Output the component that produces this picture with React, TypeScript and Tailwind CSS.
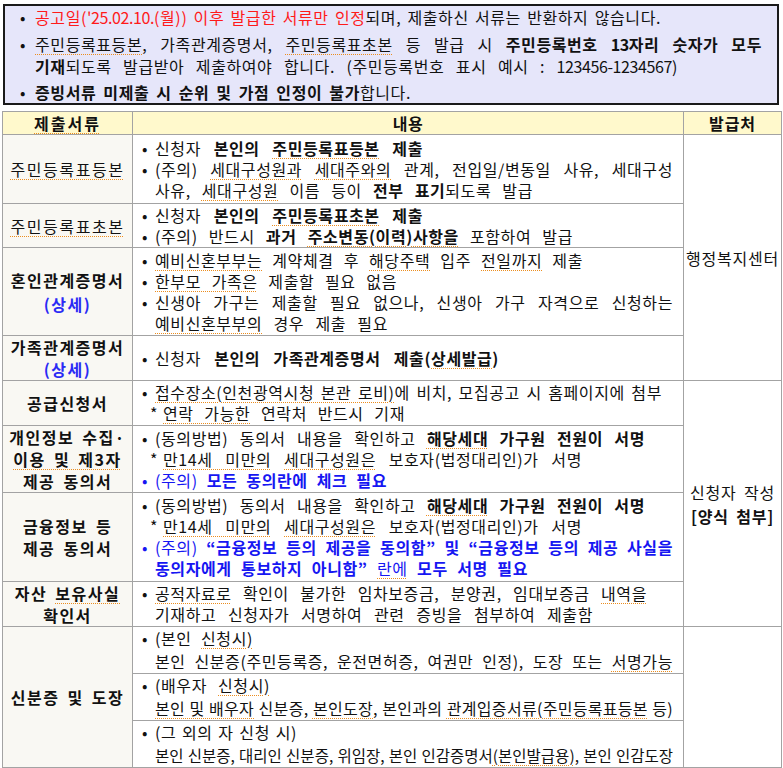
import React from 'react'

type P = { children?: React.ReactNode }

// spell-check style dotted underline seen in the source document
const U = ({ children }: P) => (
  <span className="underline decoration-dotted decoration-[#ec8d1e] decoration-[1px] underline-offset-[3px]">
    {children}
  </span>
)

const B = ({ children }: P) => <b className="font-bold">{children}</b>

// digits are narrower in the source font
const N = ({ children }: P) => <span className="tracking-[-0.4px]">{children}</span>

// one visual line, stretched to the width it has in the document
const Bl = ({ children, w, blue = false }: P & { w: string; blue?: boolean }) => (
  <div className={blue ? 'flex text-[#1616f2]' : 'flex'}>
    <span className="w-[13px] shrink-0">•</span>
    <div className={`${w} text-justify [text-align-last:justify]`}>{children}</div>
  </div>
)

const Cont = ({ children, w, blue = false }: P & { w: string; blue?: boolean }) => (
  <div className={blue ? 'pl-[13px] text-[#1616f2]' : 'pl-[13px]'}>
    <div className={`${w} text-justify [text-align-last:justify]`}>{children}</div>
  </div>
)

const Star = ({ children, w }: P & { w: string }) => (
  <div className="flex pl-[8px]">
    <span className="w-[13px] shrink-0">*</span>
    <div className={`${w} text-justify [text-align-last:justify]`}>{children}</div>
  </div>
)

const line = 'border border-[#a3a3a3]'
const leftCell = `${line} bg-[#f9f8f3] text-center align-middle font-bold leading-[22px] tracking-[1.5px] [word-spacing:3px]`
const bodyCell = `${line} align-middle pl-[9px] pr-[10px] leading-[21px]`
const idCell = `${line} align-middle pl-[9px] pr-[10px] leading-[23px]`
const sideCell = `${line} text-center align-middle tracking-[0.8px] [word-spacing:3px]`

export default function App() {
  return (
    <div className="w-[783px] h-[768px] bg-white text-[16px] tracking-[0.6px] text-[#111] font-['Noto_Sans_CJK_KR',sans-serif] pt-[4px]">
      <div className="ml-[3px] w-[776px] border-2 border-[#1a1a1a] bg-[#e6e6fa] pl-[15px] pr-[15px] flex flex-col leading-[22px]">
        <div className="flex">
          <span className="w-[15px] shrink-0">•</span>
          <div className="w-[626px] text-justify [text-align-last:justify]">
            <span className="text-[#ff1a1a]">
              공고일(<N>'25.02.10.</N>(월)) 이후 발급한 서류만 인정
            </span>
            되며, 제출하신 서류는 반환하지 않습니다.
          </div>
        </div>
        <div className="flex mt-[5px]">
          <span className="w-[15px] shrink-0">•</span>
          <div className="flex-1">
            <div className="text-justify [text-align-last:justify]">
              <U>주민등록표등본</U>, 가족관계증명서, <U>주민등록표초본</U> 등 발급 시 <B>주민등록번호 <N>13</N>자리 숫자가 모두</B>
            </div>
            <div className="w-[643px] text-justify [text-align-last:justify]">
              <B>기재</B>되도록 발급받아 제출하여야 합니다. (주민등록번호 표시 예시 : <N>123456-1234567</N>)
            </div>
          </div>
        </div>
        <div className="flex mt-[4px]">
          <span className="w-[15px] shrink-0">•</span>
          <div className="w-[376px] text-justify [text-align-last:justify]">
            <B>증빙서류 미제출 시 순위 및 가점 인정이 불가</B>합니다.
          </div>
        </div>
      </div>

      <table className="ml-[2px] mt-[6px] w-[779px] table-fixed border-collapse">
        <colgroup>
          <col className="w-[130px]" />
          <col className="w-[551px]" />
          <col className="w-[98px]" />
        </colgroup>
        <tbody>
          <tr className="h-[23px]">
            <td className={`${line} bg-[#fff9cc] text-center font-bold leading-[21px] tracking-[2px]`}>
              <U>제출서류</U>
            </td>
            <td className={`${line} bg-[#fff9cc] text-center font-bold leading-[21px]`}>내용</td>
            <td className={`${line} bg-[#fff9cc] text-center font-bold leading-[21px] tracking-[1px]`}>발급처</td>
          </tr>

          <tr className="h-[69px]">
            <td className={`${line} bg-[#f9f8f3] text-center align-middle tracking-[1.6px]`}>
              <U>주민등록표등본</U>
            </td>
            <td className={bodyCell}>
              <Bl w="w-[268px]">
                신청자 <B>본인의 <U>주민등록표등본</U> 제출</B>
              </Bl>
              <Bl w="flex-1">
                (주의) <U>세대구성원과</U> <U>세대주와의</U> 관계, 전입일/변동일 사유, 세대구성
              </Bl>
              <Cont w="w-[378px]">
                사유, <U>세대구성원</U> 이름 등이 <B>전부 표기</B>되도록 발급
              </Cont>
            </td>
            <td rowSpan={4} className={sideCell}>
              행정복지센터
            </td>
          </tr>

          <tr className="h-[44px]">
            <td className={`${line} bg-[#f9f8f3] text-center align-middle tracking-[1.6px]`}>
              <U>주민등록표초본</U>
            </td>
            <td className={bodyCell}>
              <Bl w="w-[268px]">
                신청자 <B>본인의 <U>주민등록표초본</U> 제출</B>
              </Bl>
              <Bl w="w-[418px]">
                (주의) 반드시 <B>과거 <U>주소변동(이력)사항을</U></B> 포함하여 발급
              </Bl>
            </td>
          </tr>

          <tr className="h-[88px]">
            <td className={leftCell}>
              <div className="leading-[24px]">혼인관계증명서</div>
              <div className="leading-[24px] text-[#2a2af5]">(상세)</div>
            </td>
            <td className={bodyCell}>
              <Bl w="w-[428px]">
                <U>예비신혼부부는</U> 계약체결 후 <U>해당주택</U> 입주 <U>전일까지</U> 제출
              </Bl>
              <Bl w="w-[242px]">
                <U>한부모 가족은</U> 제출할 필요 없음
              </Bl>
              <Bl w="flex-1">신생아 가구는 제출할 필요 없으나, 신생아 가구 자격으로 신청하는</Bl>
              <Cont w="w-[233px]">
                <U>예비신혼부부의</U> 경우 제출 필요
              </Cont>
            </td>
          </tr>

          <tr className="h-[42px]">
            <td className={leftCell}>
              <div>가족관계증명서</div>
              <div className="text-[#2a2af5]">(상세)</div>
            </td>
            <td className={bodyCell}>
              <Bl w="w-[344px]">
                신청자 <B>본인의 가족관계증명서 제출(<U>상세발급</U>)</B>
              </Bl>
            </td>
          </tr>

          <tr className="h-[45px]">
            <td className={leftCell}>공급신청서</td>
            <td className={bodyCell}>
              <Bl w="w-[507px]">
                <U>접수장소(인천광역시청 본관 로비)</U>에 비치, 모집공고 시 홈페이지에 첨부
              </Bl>
              <Star w="w-[242px]">
                <U>연락 가능한</U> 연락처 반드시 기재
              </Star>
            </td>
            <td rowSpan={4} className={sideCell}>
              <div>신청자 작성</div>
              <div className="font-bold">[양식 첨부]</div>
            </td>
          </tr>

          <tr className="h-[66px]">
            <td className={leftCell}>
              <div>개인정보 수집·</div>
              <div>
                <U>이용 및 제3자</U>
              </div>
              <div>제공 동의서</div>
            </td>
            <td className={bodyCell}>
              <Bl w="w-[490px]">
                (동의방법) 동의서 내용을 확인하고 <B><U>해당세대</U> 가구원 전원이 서명</B>
              </Bl>
              <Star w="w-[419px]">
                <U>만14세 미만의</U> <U>세대구성원은</U> 보호자(법정대리인)가 서명
              </Star>
              <Bl blue w="w-[232px]">
                (주의) <B>모든 동의란에 체크 필요</B>
              </Bl>
            </td>
          </tr>

          <tr className="h-[89px]">
            <td className={leftCell}>
              <div>금융정보 등</div>
              <div>제공 동의서</div>
            </td>
            <td className={bodyCell}>
              <Bl w="w-[490px]">
                (동의방법) 동의서 내용을 확인하고 <B><U>해당세대</U> 가구원 전원이 서명</B>
              </Bl>
              <Star w="w-[419px]">
                <U>만14세 미만의</U> <U>세대구성원은</U> 보호자(법정대리인)가 서명
              </Star>
              <Bl blue w="flex-1">
                (주의) <B>“금융정보 등의 제공을 동의함” 및 “금융정보 등의 제공 사실을</B>
              </Bl>
              <Cont blue w="w-[373px]">
                <B>동의자에게 통보하지 아니함”</B> <U>란에</U> <B>모두 서명 필요</B>
              </Cont>
            </td>
          </tr>

          <tr className="h-[45px]">
            <td className={leftCell}>
              <div>
                자산 <U>보유사실</U>
              </div>
              <div>확인서</div>
            </td>
            <td className={bodyCell}>
              <Bl w="w-[492px]">
                <U>공적자료로</U> 확인이 불가한 임차보증금, 분양권, 임대보증금 <U>내역을</U>
              </Bl>
              <Cont w="w-[438px]">기재하고 신청자가 서명하여 관련 증빙을 첨부하여 제출함</Cont>
            </td>
          </tr>

          <tr className="h-[46px]">
            <td rowSpan={3} className={leftCell}>
              신분증 및 도장
            </td>
            <td className={idCell}>
              <Bl w="w-[98px]">
                (본인 <U>신청시)</U>
              </Bl>
              <Cont w="w-full">
                본인 신분증(주민등록증, 운전면허증, 여권만 인정), 도장 또는 <U>서명가능</U>
              </Cont>
            </td>
            <td rowSpan={3} className={line}></td>
          </tr>
          <tr className="h-[45px]">
            <td className={idCell}>
              <Bl w="w-[115px]">
                (배우자 <U>신청시)</U>
              </Bl>
              <Cont w="w-full tracking-[0.3px]">
                <U>본인 및 배우자</U> 신분증, <U>본인도장</U>, 본인과의 <U>관계입증서류(주민등록표등본</U> 등)
              </Cont>
            </td>
          </tr>
          <tr className="h-[45px]">
            <td className={idCell}>
              <Bl w="w-[142px]">(그 외의 자 신청 시)</Bl>
              <Cont w="w-full text-[15.5px] tracking-[0px]">
                본인 신분증, 대리인 신분증, 위임장, 본인 인감증명서<U>(본인발급용)</U>, 본인 인감도장
              </Cont>
            </td>
          </tr>
        </tbody>
      </table>
    </div>
  )
}
